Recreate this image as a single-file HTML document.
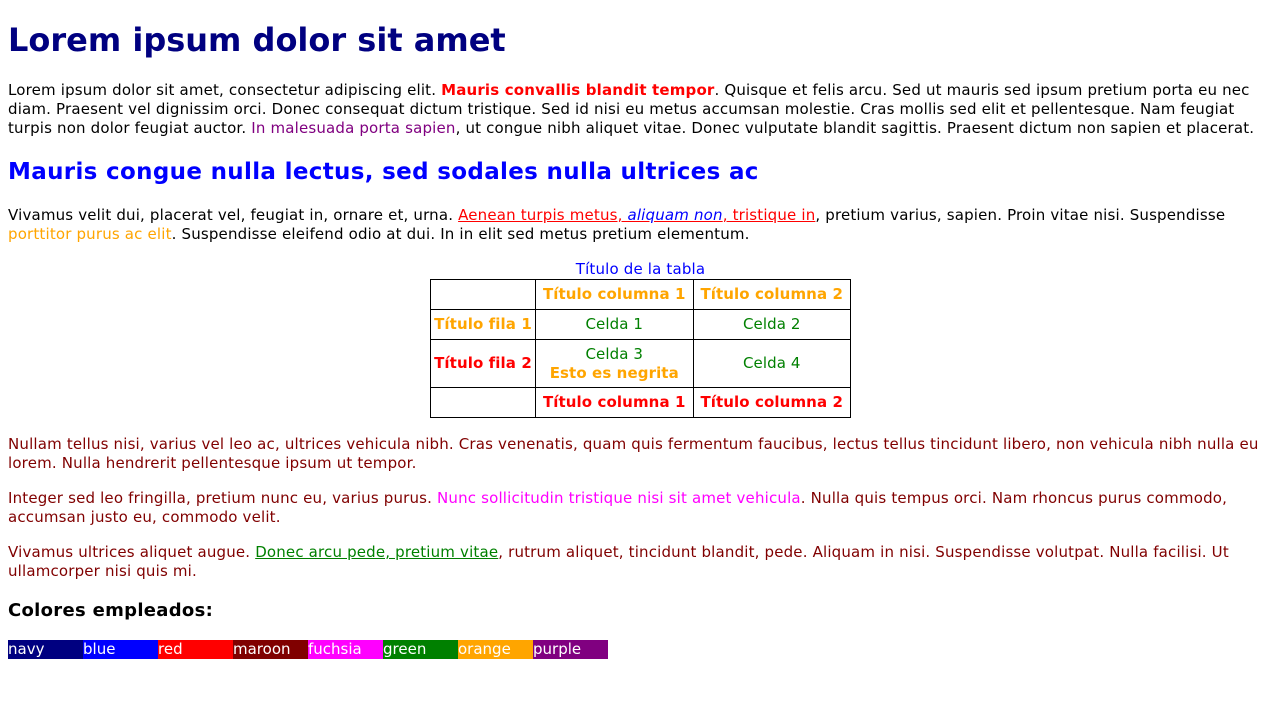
<!DOCTYPE html>
<html><head><meta charset="utf-8"><style>
body{margin:0;background:#fff;font-family:"DejaVu Sans","Liberation Sans",sans-serif;font-size:15px;line-height:19px;color:#000;letter-spacing:0.17px}
.a{position:absolute;left:8px;right:8px;margin:0}
h1{font-size:32px;line-height:38px;color:navy;font-weight:bold;letter-spacing:0}
h2{font-size:23px;line-height:28px;color:blue;font-weight:bold;letter-spacing:0.33px}
h4{font-size:18px;line-height:22px;font-weight:bold;letter-spacing:0.3px}
table{position:absolute;left:430px;top:279px;border-collapse:collapse;width:421px;letter-spacing:0.1px}
td,th{border:1px solid #000;text-align:center;padding:0 2px;height:29px;font-size:15px;white-space:nowrap}
th{color:orange}
.r{color:red}.g{color:green}.m{color:maroon}
.sw span{display:inline-block;width:75px;height:19px;color:#fff;font-size:15px;line-height:19px;vertical-align:top;letter-spacing:0}
</style></head><body>
<h1 class="a" style="top:21px">Lorem ipsum dolor sit amet</h1>
<p class="a" style="top:81px">Lorem ipsum dolor sit amet, consectetur adipiscing elit. <b class="r">Mauris convallis blandit tempor</b>. Quisque et felis arcu. Sed ut mauris sed ipsum pretium porta eu nec diam. Praesent vel dignissim orci. Donec consequat dictum tristique. Sed id nisi eu metus accumsan molestie. Cras mollis sed elit et pellentesque. Nam feugiat turpis non dolor feugiat auctor. <span style="color:purple">In malesuada porta sapien</span>, ut congue nibh aliquet vitae. Donec vulputate blandit sagittis. Praesent dictum non sapien et placerat.</p>
<h2 class="a" style="top:158px">Mauris congue nulla lectus, sed sodales nulla ultrices ac</h2>
<p class="a" style="top:206px">Vivamus velit dui, placerat vel, feugiat in, ornare et, urna. <u class="r">Aenean turpis metus, <i style="color:blue">aliquam non</i>, tristique in</u>, pretium varius, sapien. Proin vitae nisi. Suspendisse <span style="color:orange">porttitor purus ac elit</span>. Suspendisse eleifend odio at dui. In in elit sed metus pretium elementum.</p>
<div style="position:absolute;left:430px;width:421px;top:260px;text-align:center;color:blue">Título de la tabla</div>
<table>
<tr><td style="width:100px"></td><th>Título columna 1</th><th>Título columna 2</th></tr>
<tr><th>Título fila 1</th><td class="g">Celda 1</td><td class="g">Celda 2</td></tr>
<tr><th class="r" style="height:47px">Título fila 2</th><td class="g">Celda 3<br><b style="color:orange">Esto es negrita</b></td><td class="g">Celda 4</td></tr>
<tr><td></td><th class="r">Título columna 1</th><th class="r">Título columna 2</th></tr>
</table>
<p class="a m" style="top:435px">Nullam tellus nisi, varius vel leo ac, ultrices vehicula nibh. Cras venenatis, quam quis fermentum faucibus, lectus tellus tincidunt libero, non vehicula nibh nulla eu lorem. Nulla hendrerit pellentesque ipsum ut tempor.</p>
<p class="a m" style="top:489px">Integer sed leo fringilla, pretium nunc eu, varius purus. <span style="color:fuchsia">Nunc sollicitudin tristique nisi sit amet vehicula</span>. Nulla quis tempus orci. Nam rhoncus purus commodo, accumsan justo eu, commodo velit.</p>
<p class="a m" style="top:543px">Vivamus ultrices aliquet augue. <u class="g">Donec arcu pede, pretium vitae</u>, rutrum aliquet, tincidunt blandit, pede. Aliquam in nisi. Suspendisse volutpat. Nulla facilisi. Ut ullamcorper nisi quis mi.</p>
<h4 class="a" style="top:600px">Colores empleados:</h4>
<div class="a sw" style="top:640px;font-size:0"><span style="background:navy">navy</span><span style="background:blue">blue</span><span style="background:red">red</span><span style="background:maroon">maroon</span><span style="background:fuchsia">fuchsia</span><span style="background:green">green</span><span style="background:orange">orange</span><span style="background:purple">purple</span></div>
</body></html>
